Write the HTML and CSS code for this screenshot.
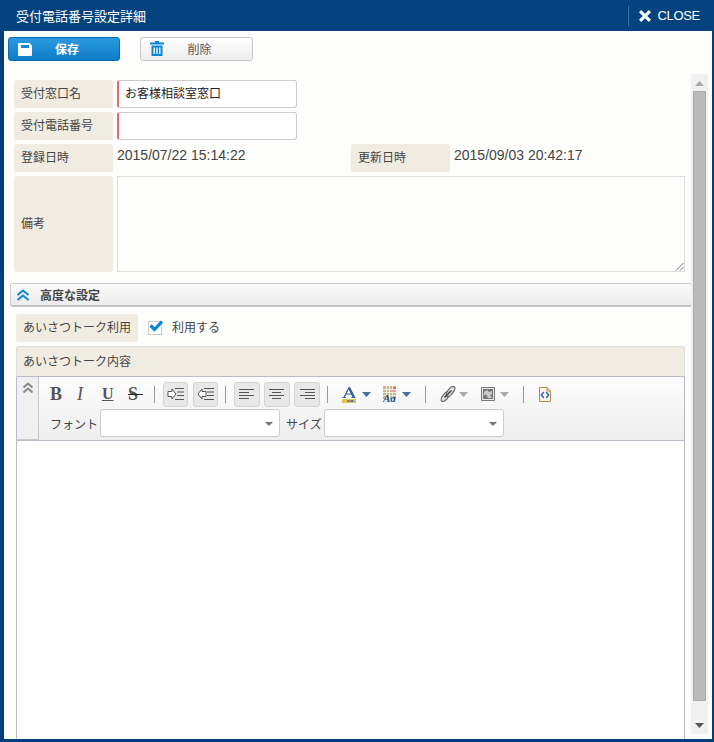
FILE: index.html
```html
<!DOCTYPE html>
<html lang="ja">
<head>
<meta charset="utf-8">
<title>受付電話番号設定詳細</title>
<link rel="stylesheet" href="styles.css">
</head>
<body>
<div class="window">
  <header class="titlebar">
    <h1 class="title">受付電話番号設定詳細</h1>
    <div class="close">
      <svg class="close-x" width="14" height="14" viewBox="0 0 14 14"><path d="M1 3.200 3.200 1 7 4.800 10.800 1 13 3.200 9.200 7 13 10.800 10.800 13 7 9.200 3.200 13 1 10.800 4.800 7z" fill="#fff"/></svg>
      <span>CLOSE</span>
    </div>
  </header>
  <div class="actions">
    <button class="btn btn-primary" type="button">
      <svg class="btn-icon" width="14" height="13" viewBox="0 0 14 13"><path d="M1 0h10.500L14 2.500V12a1 1 0 0 1-1 1H1a1 1 0 0 1-1-1V1a1 1 0 0 1 1-1z" fill="#fff"/><path d="M3 2h8v3H3z" fill="#1a84cf"/></svg>
      <span>保存</span>
    </button>
    <button class="btn btn-plain" type="button">
      <svg class="btn-icon" width="14" height="15" viewBox="0 0 14 15"><path d="M5 0h4v1.500h5V3.500H0V1.500h5z" fill="#0a86d8"/><path d="M1.500 4.500h11V15h-11zM3.500 6.500V13H5V6.500zM6.300 6.500V13h1.400V6.500zM9 6.500V13h1.500V6.500z" fill="#0a86d8" fill-rule="evenodd"/></svg>
      <span>削除</span>
    </button>
  </div>
  <div class="content">
    <main class="form">
      <div class="row">
        <div class="label">受付窓口名</div>
        <div class="input required">お客様相談室窓口</div>
      </div>
      <div class="row">
        <div class="label">受付電話番号</div>
        <div class="input required"></div>
      </div>
      <div class="row">
        <div class="label">登録日時</div>
        <div class="value">2015/07/22 15:14:22</div>
        <div class="label">更新日時</div>
        <div class="value">2015/09/03 20:42:17</div>
      </div>
      <div class="row row-note">
        <div class="label">備考</div>
        <div class="textarea">
          <svg class="grip" width="9" height="9" viewBox="0 0 9 9"><path d="M8.500 1 1 8.500M8.500 5 5 8.500" stroke="#777" fill="none"/></svg>
        </div>
      </div>
      <div class="section">
        <svg class="chevrons" width="14" height="12" viewBox="0 0 14 12"><path d="M1.500 6 7 1.500 12.500 6M1.500 11 7 6.500 12.500 11" stroke="#0a86d8" stroke-width="2" fill="none"/></svg>
        <span>高度な設定</span>
      </div>
      <div class="greeting">
        <div class="row greeting-row">
          <div class="label label-wide">あいさつトーク利用</div>
          <div class="check-box">
            <svg class="check" width="16" height="14" viewBox="0 0 16 14"><path d="M2.500 6.500 6.500 10.500 14 2.500" stroke="#0a86d8" stroke-width="3.200" fill="none"/></svg>
          </div>
          <span class="check-text">利用する</span>
        </div>
        <div class="panel-head">あいさつトーク内容</div>
        <div class="editor">
          <div class="ed-toolbar">
            <div class="ed-collapse">
              <svg width="12" height="12" viewBox="0 0 12 12"><path d="M1.500 5.500 6 1.500 10.500 5.500M1.500 10.500 6 6.500 10.500 10.500" stroke="#888" stroke-width="2" fill="none"/></svg>
            </div>
            <div class="ed-tools">
              <div class="tool-line">
                <span class="tb tb-b">B</span>
                <span class="tb tb-i">I</span>
                <span class="tb tb-u">U</span>
                <span class="tb tb-s">S</span>
                <span class="sep sep-a"></span>
                <span class="tbtn"><svg width="18" height="14" viewBox="0 0 18 14"><path d="M1 4.500h4V2l4 5-4 5V9.500H1z" fill="#fff" stroke="#555"/><path d="M8 1.500h9M10 5h7M10 8.500h7M8 12.500h9" stroke="#555"/></svg></span>
                <span class="tbtn"><svg width="18" height="14" viewBox="0 0 18 14"><path d="M9 4.500H5V2L1 7l4 5V9.500h4z" fill="#fff" stroke="#555"/><path d="M7 1.500h10M10 5h7M10 8.500h7M7 12.500h10" stroke="#555"/></svg></span>
                <span class="sep"></span>
                <span class="tbtn tbtn-wide"><svg width="16" height="12" viewBox="0 0 16 12"><path d="M0 1.500h15M0 4.500h10M0 7.500h15M0 10.500h10" stroke="#555"/></svg></span>
                <span class="tbtn tbtn-wide"><svg width="16" height="12" viewBox="0 0 16 12"><path d="M0 1.500h15M3 4.500h9M0 7.500h15M3 10.500h9" stroke="#555"/></svg></span>
                <span class="tbtn tbtn-wide"><svg width="16" height="12" viewBox="0 0 16 12"><path d="M1 1.500h15M6 4.500h10M1 7.500h15M6 10.500h10" stroke="#555"/></svg></span>
                <span class="sep sep-d"></span>
                <svg class="ic ic-color" width="14" height="17" viewBox="0 0 14 17"><path d="M2 11.500 7 1.500" stroke="#2d5f96" stroke-width="1.200" fill="none"/><path d="M7 1.500 12 11.500" stroke="#2d5f96" stroke-width="2.200" fill="none"/><path d="M4 8h6.500M.5 11.500h3.500M9.500 11.500h4" stroke="#2d5f96" fill="none"/><path d="M0 13h14v4H0z" fill="#d8c65c"/><path d="M5 14h3v2H5z" fill="#d96a4a"/><path d="M8.500 14h3v2h-3z" fill="#4a74c9"/></svg>
                <svg class="drop" width="9" height="5" viewBox="0 0 9 5"><path d="M0 0h9L4.500 5z" fill="#3f6f9f"/></svg>
                <svg class="ic ic-bg" width="16" height="16" viewBox="0 0 16 16"><path d="M0 0h13v13H0z" fill="#c4b88a"/><path d="M3 0h1v13H3zM6 0h1v13H6zM9 0h1v13H9zM0 3h13v1H0zM0 6h13v1H0zM0 9h13v1H0z" fill="#efece0"/><path d="M10 1h3v2h-3z" fill="#d0785a"/><path d="M7 4h6v2H7z" fill="#e8a0a8"/><text x="0" y="15.500" class="ic-text">Aa</text></svg>
                <svg class="drop" width="9" height="5" viewBox="0 0 9 5"><path d="M0 0h9L4.500 5z" fill="#3f6f9f"/></svg>
                <span class="sep sep-b"></span>
                <svg class="ic ic-link" width="16" height="16" viewBox="0 0 16 16"><g fill="#e4e4e4" stroke="#666" stroke-width="1.200"><ellipse cx="5.500" cy="10.500" rx="6" ry="2.600" transform="rotate(-52 5.500 10.500)"/><ellipse cx="10.500" cy="5.500" rx="6" ry="2.600" transform="rotate(-52 10.500 5.500)"/></g><path d="M4.500 11.500 11.500 4.500" stroke="#444" stroke-width="1.600"/></svg>
                <svg class="drop" width="9" height="5" viewBox="0 0 9 5"><path d="M0 0h9L4.500 5z" fill="#aaa"/></svg>
                <svg class="ic ic-img" width="14" height="14" viewBox="0 0 14 14"><path d="M.5.500h13v13H.500z" fill="#e8e8e8" stroke="#777"/><path d="M2 2h10v10H2z" fill="#777"/><path d="M3 5l3-2 2 2 3-1v3L9 8l2 3H7L5 7 3 9z" fill="#ccc"/></svg>
                <svg class="drop" width="9" height="5" viewBox="0 0 9 5"><path d="M0 0h9L4.500 5z" fill="#aaa"/></svg>
                <span class="sep sep-c"></span>
                <svg class="ic ic-src" width="12" height="15" viewBox="0 0 12 15"><path d="M.5.500h7.500l3.500 3.500v10.500H.500z" fill="#fbf6e6" stroke="#a88d50"/><path d="M8 .5V4h3.500" fill="none" stroke="#a88d50"/><path d="M4.800 5 2.300 8 4.800 11M7.200 5 9.700 8 7.200 11" stroke="#2a6ab5" stroke-width="1.500" fill="none"/></svg>
              </div>
              <div class="tool-line tool-line-2">
                <span class="sel-label">フォント</span>
                <div class="select select-font"><i class="caret"></i></div>
                <span class="sel-label sel-label-size">サイズ</span>
                <div class="select select-size"><i class="caret"></i></div>
              </div>
            </div>
          </div>
          <div class="ed-body"></div>
        </div>
      </div>
    </main>
    <aside class="scrollbar">
      <svg class="arrow-up" width="9" height="5" viewBox="0 0 9 5"><path d="M0 5h9L4.500 0z" fill="#aaa"/></svg>
      <div class="thumb"></div>
      <svg class="arrow-down" width="9" height="5" viewBox="0 0 9 5"><path d="M0 0h9L4.500 5z" fill="#555"/></svg>
    </aside>
  </div>
</div>
</body>
</html>
```
FILE: styles.css
```css
* { box-sizing: border-box; }
html, body { margin: 0; padding: 0; }
body {
  width: 714px;
  height: 742px;
  overflow: hidden;
  background: #fff;
  font-family: "Liberation Sans", "Noto Sans CJK JP", sans-serif;
  font-size: 12px;
  color: #333;
}
.window {
  width: 714px;
  height: 742px;
  display: flex;
  flex-direction: column;
  background: #fdfdfb;
  border-left: 4px solid #02407d;
  border-right: 2px solid #02407d;
  border-bottom: 3px solid #02407d;
}
.titlebar {
  margin: 0 -2px 0 -4px;
  height: 31px;
  flex: none;
  display: flex;
  align-items: center;
  justify-content: space-between;
  padding: 0 14px 0 16px;
  background-color: #02407d;
  background-image: conic-gradient(#064580 25%, transparent 0 50%, #064580 0 75%, transparent 0);
  background-size: 2px 2px;
  color: #fff;
}
.title {
  margin: 0;
  font-size: 13px;
  font-weight: normal;
  font-family: "Noto Sans CJK JP", sans-serif;
}
.close {
  display: flex;
  align-items: center;
  height: 20px;
  padding-left: 9px;
  gap: 5px;
  border-left: 1px solid #3a73a8;
  box-shadow: -1px 0 0 #02305c;
  font-size: 13px;
  letter-spacing: -0.3px;
}
.actions {
  flex: none;
  display: flex;
  gap: 20px;
  padding: 6px 0 0 4px;
  height: 43px;
}
.btn {
  position: relative;
  height: 24px;
  padding: 0 0 2px 6px;
  display: flex;
  align-items: center;
  justify-content: center;
  font-family: "Noto Sans CJK JP", sans-serif;
  font-size: 12px;
  border-radius: 3px;
}
.btn-icon { position: absolute; left: 9px; top: 3px; }
.btn-primary {
  width: 112px;
  border: 1px solid #0a6cb0;
  background: linear-gradient(#2a9ae0, #0f7cc6);
  color: #fff;
  font-weight: bold;
}
.btn-primary .btn-icon { top: 5px; }
.btn-plain {
  width: 113px;
  border: 1px solid #c8c8c8;
  background: linear-gradient(#fff, #ececec);
  color: #555;
}
.content {
  flex: 1;
  min-height: 0;
  display: flex;
}
.form {
  flex: none;
  width: 681px;
  padding: 6px 0 0 6px;
  display: flex;
  flex-direction: column;
}
.row {
  display: flex;
  height: 28px;
  margin: 0 0 4px 4px;
  width: 667px;
}
.label {
  flex: none;
  width: 99px;
  margin-right: 4px;
  padding: 0 0 3px 7px;
  display: flex;
  align-items: center;
  background: #f0ece2;
  border-radius: 3px;
  font-family: "Noto Sans CJK JP", sans-serif;
  color: #444;
}
.input {
  width: 180px;
  display: flex;
  align-items: center;
  padding: 0 0 3px 6px;
  background: #fff;
  border: 1px solid #ccc;
  border-radius: 3px;
  font-family: "Noto Sans CJK JP", sans-serif;
  color: #222;
}
.required { border-left: 2px solid #e46a6a; }
.value {
  flex: none;
  width: 234px;
  padding-top: 3px;
  font-size: 14px;
  line-height: 16px;
  color: #444;
  font-family: "Liberation Sans", sans-serif;
}
.row-note { height: 96px; width: 671px; margin-bottom: 11px; }
.textarea {
  position: relative;
  width: 568px;
  background: #fdfdfb;
  border: 1px solid #ddd;
}
.grip { position: absolute; right: 0; bottom: 0; }
.section {
  flex: none;
  height: 24px;
  width: 682px;
  display: flex;
  align-items: center;
  gap: 10px;
  padding-left: 5px;
  border: 1px solid #ccc;
  border-bottom: 2px solid #c4c4c4;
  border-radius: 3px;
  background: linear-gradient(#fafafa, #ececec);
  font-family: "Noto Sans CJK JP", sans-serif;
  font-weight: bold;
  color: #444;
}
.greeting {
  flex: 1;
  min-height: 0;
  margin: 7px 0 0 6px;
  display: flex;
  flex-direction: column;
}
.greeting-row { margin: 0 0 4px 0; align-items: center; }
.label-wide { width: 122px; height: 28px; margin-right: 10px; }
.check-box {
  position: relative;
  width: 14px;
  height: 14px;
  border: 1px solid #ccc;
  background: #fff;
  margin-right: 10px;
}
.check { position: absolute; left: -1px; top: -3px; }
.check-text { padding-bottom: 4px; font-family: "Noto Sans CJK JP", sans-serif; color: #444; }
.panel-head {
  flex: none;
  width: 669px;
  height: 31px;
  display: flex;
  align-items: center;
  padding: 0 0 2px 6px;
  background: #f0ece2;
  border: 1px solid #ddd;
  border-bottom-color: #b8bcc8;
  border-radius: 3px 3px 0 0;
  font-family: "Noto Sans CJK JP", sans-serif;
  color: #444;
}
.editor {
  flex: 1;
  min-height: 0;
  width: 669px;
  display: flex;
  flex-direction: column;
  border-left: 1px solid #b8bcc8;
  border-right: 1px solid #b8bcc8;
}
.ed-toolbar {
  flex: none;
  height: 64px;
  display: flex;
  border-bottom: 1px solid #b8bcc8;
  background: linear-gradient(#fdfdfd, #eeeeee);
}
.ed-collapse {
  flex: none;
  width: 22px;
  height: 63px;
  padding: 5px 0 0 5px;
  background: #f0f0f0;
  border-right: 1px solid #c8c8c8;
  border-bottom: 1px solid #c8c8c8;
}
.ed-collapse svg { display: block; }
.ed-tools { flex: 1; padding: 4px 0 0 11px; }
.tool-line { display: flex; align-items: center; height: 26px; }
.tool-line-2 { height: 28px; margin-top: 2px; }
.tb {
  position: relative;
  width: 26px;
  flex: none;
  font-family: "Liberation Serif", serif;
  font-size: 18px;
  font-weight: bold;
  color: #555;
  line-height: 20px;
}
.tb-i { font-style: italic; font-weight: normal; padding-left: 1px; }
.tb-u { text-decoration: underline; font-size: 16px; }
.tb-s::after {
  content: "";
  position: absolute;
  left: 0;
  top: 10px;
  width: 15px;
  height: 1px;
  background: #222;
}
.sep {
  flex: none;
  width: 1px;
  height: 17px;
  background: #999;
  margin: 0 8px;
}
.sep-a { margin-left: 0; }
.sep-b { margin-left: 14px; margin-right: 14px; }
.sep-c { margin-left: 14px; margin-right: 15px; }
.tbtn {
  flex: none;
  width: 25px;
  height: 25px;
  margin-right: 5px;
  display: flex;
  align-items: center;
  justify-content: center;
  background: #e8e8e8;
  border: 1px solid #d4d4d4;
  border-radius: 3px;
}
.tbtn-wide { width: 26px; margin-right: 4px; }
.tbtn + .sep { margin-left: 2px; }
.tbtn + .sep-d { margin-left: 3px; }
.ic { flex: none; }
.ic-color { margin: 0 6px 0 6px; }
.ic-bg { margin: 0 3px 0 12px; }
.ic-text {
  font-family: "Liberation Serif", serif;
  font-style: italic;
  font-weight: bold;
  font-size: 11px;
  fill: #234f8c;
}
.ic-link { margin-right: 3px; }
.ic-img { margin: 0 5px 0 13px; }
.drop { flex: none; }
.sel-label {
  font-family: "Noto Sans CJK JP", sans-serif;
  font-size: 12px;
  color: #444;
  margin-right: 2px;
}
.sel-label-size { margin-left: 6px; }
.select {
  position: relative;
  height: 28px;
  background: #fff;
  border: 1px solid #ccc;
  border-radius: 3px;
}
.select-font { width: 180px; }
.select-size { width: 180px; }
.caret {
  position: absolute;
  right: 6px;
  top: 12px;
  border: 4px solid transparent;
  border-top: 4px solid #777;
  border-bottom: 0;
}
.ed-body { flex: 1; background: #fff; }
.scrollbar {
  flex: none;
  position: relative;
  width: 17px;
  margin: 0 0 5px 6px;
  background: #f1f1f1;
  display: flex;
  flex-direction: column;
  align-items: center;
}
.arrow-up { margin-top: 7px; }
.thumb {
  width: 13px;
  height: 610px;
  margin-top: 5px;
  background: #bbb;
  border: 1px solid #aaa;
}
.arrow-down { margin-top: 22px; }
```
